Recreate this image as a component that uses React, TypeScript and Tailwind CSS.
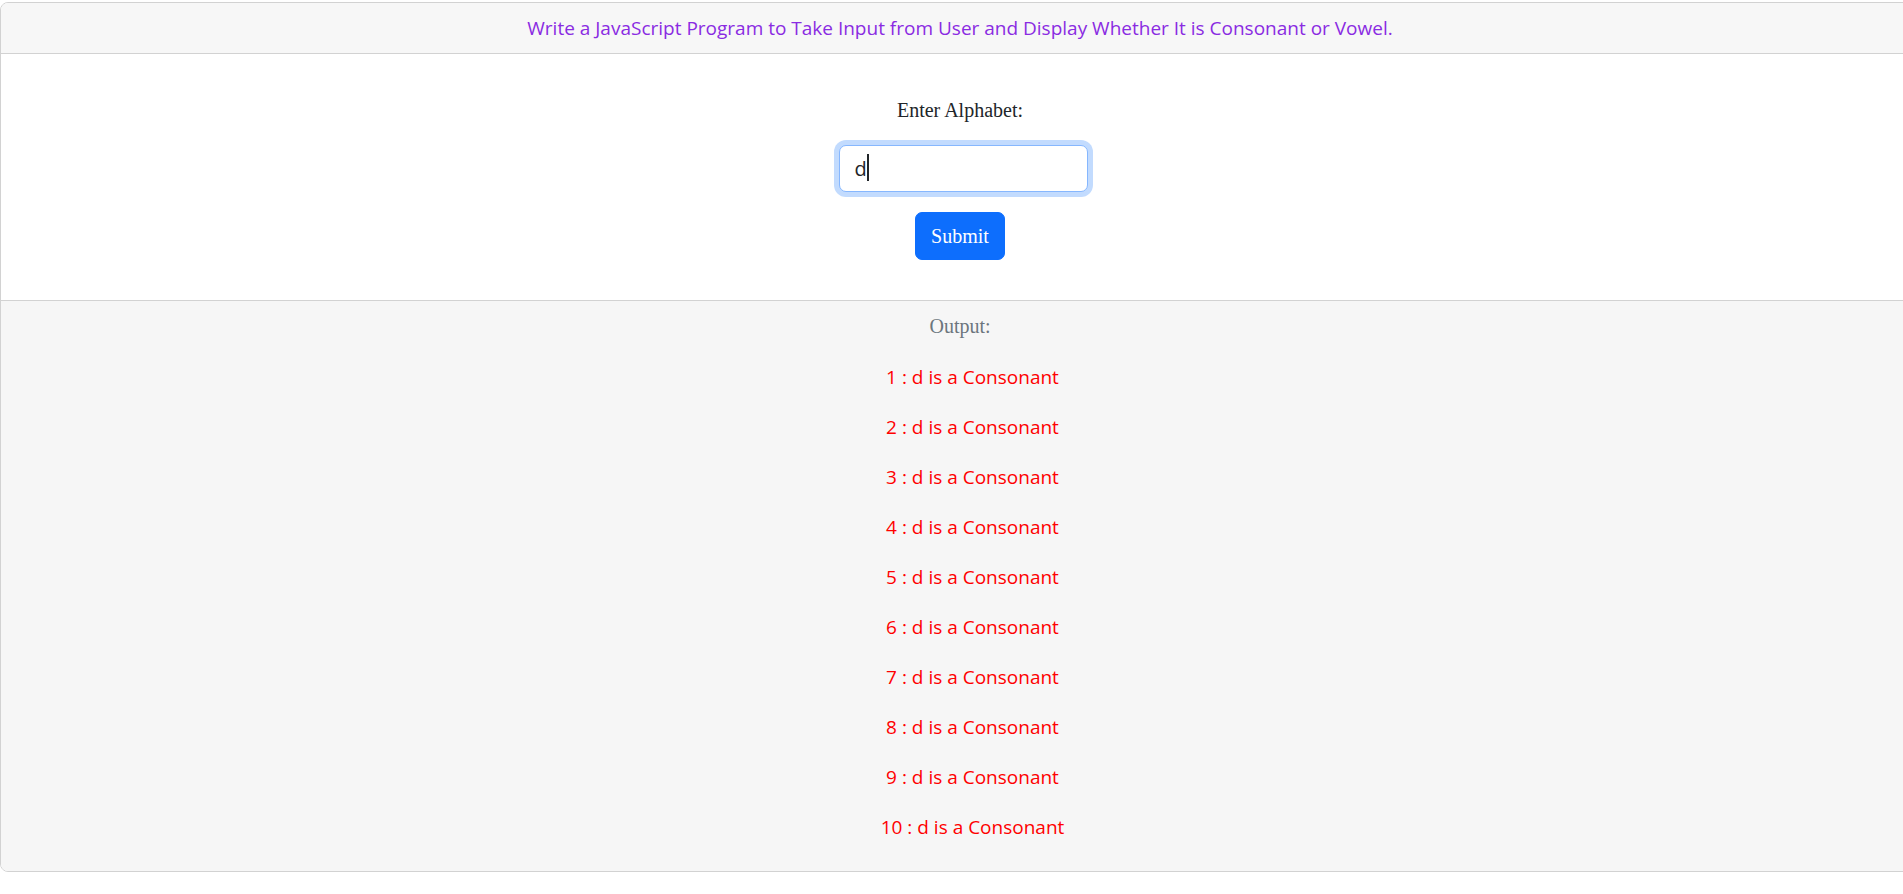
const results = Array.from({ length: 10 }, (_, i) => ({ n: i + 1, letter: "d" }));

export default function App() {
  return (
    <div className="min-h-screen w-full overflow-hidden bg-white pt-[2px] font-['Liberation_Serif',serif] text-[20px] leading-[30px] text-[#212529]">
      <div className="w-[1920px] overflow-hidden rounded-[8px] border border-[#d2d2d2]">
        <div className="border-b border-[#d2d2d2] bg-[#f7f7f7] py-[10px] text-center font-['Open_Sans',sans-serif] text-[19px] text-[#8a2be2]">
          Write a JavaScript Program to Take Input from User and Display Whether It is Consonant or Vowel.
        </div>

        <div className="flex flex-col items-center bg-white pt-[41px] pb-[40px]">
          <label htmlFor="alpha" className="mb-[20px] block h-[30px]">
            Enter Alphabet:
          </label>
          <div className="relative mb-[20px] ml-[6px]">
            <input
              id="alpha"
              readOnly
              value="d"
              className="block h-[47px] w-[249px] rounded-[7px] border border-[#86b7fe] bg-white px-[15px] font-['Open_Sans',sans-serif] text-[20px] text-[#212529] caret-transparent shadow-[0_0_0_5px_rgba(13,110,253,0.25)] outline-none"
            />
            <span className="absolute top-[9px] left-[28px] h-[27px] w-[2px] bg-[#212529]" />
          </div>
          <button className="h-[48px] w-[90px] rounded-[7px] border border-[#0d6efd] bg-[#0d6efd] text-white">
            Submit
          </button>
        </div>

        <div className="border-t border-[#d2d2d2] bg-[#f6f6f6] py-[10px] text-center">
          <p className="mb-[21px] text-[#6c757d]">Output:</p>
          <ul className="pl-[25px] font-['Open_Sans',sans-serif] text-[19px] text-[#ff0000]">
            {results.map((r) => (
              <li key={r.n} className="mb-[20px] last:mb-[19px]">
                {r.n} : {r.letter} is a Consonant
              </li>
            ))}
          </ul>
        </div>
      </div>
    </div>
  );
}
